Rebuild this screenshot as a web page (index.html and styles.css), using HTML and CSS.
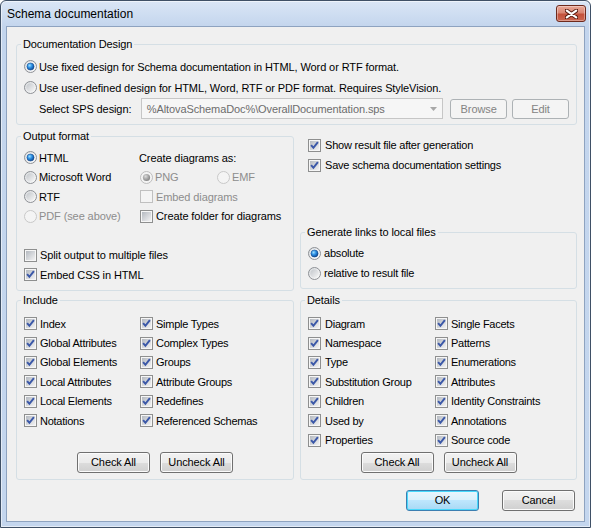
FILE: index.html
```html
<!DOCTYPE html>
<html lang="en">
<head>
<meta charset="utf-8">
<title>Schema documentation</title>
<link rel="stylesheet" href="styles.css">
</head>
<body>
<svg class="defs" width="0" height="0" aria-hidden="true">
  <defs>
    <linearGradient id="g-box" x1="0" y1="0" x2="1" y2="1">
      <stop offset="0" stop-color="#b4b9c0"/>
      <stop offset="1" stop-color="#f2f2f3"/>
    </linearGradient>
    <linearGradient id="g-ring" x1="0" y1="0" x2="1" y2="1">
      <stop offset="0" stop-color="#d9dbde"/>
      <stop offset="1" stop-color="#fdfdfd"/>
    </linearGradient>
    <linearGradient id="g-rin" x1="0" y1="0" x2="1" y2="1">
      <stop offset="0" stop-color="#c2c6cb"/>
      <stop offset="1" stop-color="#f6f6f6"/>
    </linearGradient>
    <radialGradient id="g-dot" cx="0.38" cy="0.35" r="0.72">
      <stop offset="0" stop-color="#9ee0ff"/>
      <stop offset="0.45" stop-color="#2b8ee3"/>
      <stop offset="1" stop-color="#0c3f88"/>
    </radialGradient>
    <radialGradient id="g-dotg" cx="0.38" cy="0.35" r="0.72">
      <stop offset="0" stop-color="#dcdcdc"/>
      <stop offset="0.5" stop-color="#a9a9a9"/>
      <stop offset="1" stop-color="#7e7e7e"/>
    </radialGradient>
    <symbol id="cb-on" viewBox="0 0 13 13">
      <rect x="0.5" y="0.5" width="12" height="12" fill="#f6f6f6" stroke="#8e8f8f"/>
      <rect x="2" y="2" width="9" height="9" fill="url(#g-box)"/>
      <path d="M3.1 6.2 L5.4 8.8 L9.9 3.2" fill="none" stroke="#3b58a8" stroke-width="2"/>
    </symbol>
    <symbol id="cb-off" viewBox="0 0 13 13">
      <rect x="0.5" y="0.5" width="12" height="12" fill="#f6f6f6" stroke="#8e8f8f"/>
      <rect x="2" y="2" width="9" height="9" fill="url(#g-box)"/>
    </symbol>
    <symbol id="cb-dis" viewBox="0 0 13 13">
      <rect x="0.5" y="0.5" width="12" height="12" fill="#f4f4f4" stroke="#c0c0c0"/>
    </symbol>
    <symbol id="rb-on" viewBox="0 0 13 13">
      <circle cx="6.5" cy="6.5" r="6" fill="url(#g-ring)" stroke="#8d9095"/>
      <circle cx="6.5" cy="6.5" r="4.4" fill="#ffffff"/>
      <circle cx="6.5" cy="6.5" r="3.6" fill="url(#g-dot)" stroke="#174a8a" stroke-width="0.6"/>
    </symbol>
    <symbol id="rb-off" viewBox="0 0 13 13">
      <circle cx="6.5" cy="6.5" r="6" fill="url(#g-ring)" stroke="#8d9095"/>
      <circle cx="6.5" cy="6.5" r="4.2" fill="url(#g-rin)"/>
    </symbol>
    <symbol id="rb-don" viewBox="0 0 13 13">
      <circle cx="6.5" cy="6.5" r="6" fill="#f4f4f4" stroke="#bdbdbd"/>
      <circle cx="6.5" cy="6.5" r="3.6" fill="url(#g-dotg)"/>
    </symbol>
    <symbol id="rb-doff" viewBox="0 0 13 13">
      <circle cx="6.5" cy="6.5" r="6" fill="#f4f4f4" stroke="#c8c8c8"/>
    </symbol>
  </defs>
</svg>

<div class="window">
  <div class="titlebar">
    <span class="title">Schema documentation</span>
    <div class="close">
      <svg width="13" height="10" viewBox="0 0 13 10">
        <path d="M1.5 1.5 L11.5 8.5 M11.5 1.5 L1.5 8.5" stroke="#5a1d12" stroke-width="4" stroke-linecap="round"/>
        <path d="M1.8 1.7 L11.2 8.3 M11.2 1.7 L1.8 8.3" stroke="#ffffff" stroke-width="2.2" stroke-linecap="round"/>
      </svg>
    </div>
  </div>

  <div class="client">
    <fieldset class="group doc">
      <legend>Documentation Design</legend>
      <div class="doc-body">
        <label class="row"><svg class="ic rb"><use href="#rb-on"/></svg><span>Use fixed design for Schema documentation in HTML, Word or RTF format.</span></label>
        <label class="row"><svg class="ic rb"><use href="#rb-off"/></svg><span>Use user-defined design for HTML, Word, RTF or PDF format. Requires StyleVision.</span></label>
        <div class="row sel">
          <span class="sel-label">Select SPS design:</span>
          <div class="combo">
            <span class="combo-val">%AltovaSchemaDoc%\OverallDocumentation.sps</span>
            <span class="combo-arr"><svg width="7" height="4" viewBox="0 0 7 4"><path d="M0 0 H7 L3.5 4 Z" fill="#a7a7a7"/></svg></span>
          </div>
          <button class="btn dis browse">Browse</button>
          <button class="btn dis edit">Edit</button>
        </div>
      </div>
    </fieldset>

    <div class="mid">
      <fieldset class="group out">
        <legend>Output format</legend>
        <div class="out-body">
          <label class="cell"><svg class="ic rb"><use href="#rb-on"/></svg><span>HTML</span></label>
          <span class="cell c2 lbl">Create diagrams as:</span>
          <label class="cell"><svg class="ic rb"><use href="#rb-off"/></svg><span>Microsoft Word</span></label>
          <div class="cell c2">
            <label class="png dis"><svg class="ic rb"><use href="#rb-don"/></svg><span>PNG</span></label>
            <label class="dis"><svg class="ic rb"><use href="#rb-doff"/></svg><span>EMF</span></label>
          </div>
          <label class="cell"><svg class="ic rb"><use href="#rb-off"/></svg><span>RTF</span></label>
          <label class="cell c2 dis"><svg class="ic cb"><use href="#cb-dis"/></svg><span>Embed diagrams</span></label>
          <label class="cell dis"><svg class="ic rb"><use href="#rb-doff"/></svg><span>PDF (see above)</span></label>
          <label class="cell c2"><svg class="ic cb"><use href="#cb-off"/></svg><span>Create folder for diagrams</span></label>
          <span class="cell span"></span>
          <label class="cell span"><svg class="ic cb"><use href="#cb-off"/></svg><span>Split output to multiple files</span></label>
          <label class="cell span"><svg class="ic cb"><use href="#cb-on"/></svg><span>Embed CSS in HTML</span></label>
        </div>
      </fieldset>

      <div class="right">
        <label class="rrow"><svg class="ic cb"><use href="#cb-on"/></svg><span>Show result file after generation</span></label>
        <label class="rrow"><svg class="ic cb"><use href="#cb-on"/></svg><span>Save schema documentation settings</span></label>
        <fieldset class="group links">
          <legend>Generate links to local files</legend>
          <div class="links-body">
            <label class="lrow"><svg class="ic rb"><use href="#rb-on"/></svg><span>absolute</span></label>
            <label class="lrow"><svg class="ic rb"><use href="#rb-off"/></svg><span>relative to result file</span></label>
          </div>
        </fieldset>
      </div>
    </div>

    <div class="bot">
      <fieldset class="group inc">
        <legend>Include</legend>
        <div class="list-body">
          <div class="cols">
            <div class="col col1">
              <label class="item"><svg class="ic cb"><use href="#cb-on"/></svg><span>Index</span></label>
              <label class="item"><svg class="ic cb"><use href="#cb-on"/></svg><span>Global Attributes</span></label>
              <label class="item"><svg class="ic cb"><use href="#cb-on"/></svg><span>Global Elements</span></label>
              <label class="item"><svg class="ic cb"><use href="#cb-on"/></svg><span>Local Attributes</span></label>
              <label class="item"><svg class="ic cb"><use href="#cb-on"/></svg><span>Local Elements</span></label>
              <label class="item"><svg class="ic cb"><use href="#cb-on"/></svg><span>Notations</span></label>
            </div>
            <div class="col">
              <label class="item"><svg class="ic cb"><use href="#cb-on"/></svg><span>Simple Types</span></label>
              <label class="item"><svg class="ic cb"><use href="#cb-on"/></svg><span>Complex Types</span></label>
              <label class="item"><svg class="ic cb"><use href="#cb-on"/></svg><span>Groups</span></label>
              <label class="item"><svg class="ic cb"><use href="#cb-on"/></svg><span>Attribute Groups</span></label>
              <label class="item"><svg class="ic cb"><use href="#cb-on"/></svg><span>Redefines</span></label>
              <label class="item"><svg class="ic cb"><use href="#cb-on"/></svg><span>Referenced Schemas</span></label>
            </div>
          </div>
          <div class="btnrow">
            <button class="btn">Check All</button>
            <button class="btn">Uncheck All</button>
          </div>
        </div>
      </fieldset>

      <fieldset class="group det">
        <legend>Details</legend>
        <div class="list-body">
          <div class="cols">
            <div class="col col1">
              <label class="item"><svg class="ic cb"><use href="#cb-on"/></svg><span>Diagram</span></label>
              <label class="item"><svg class="ic cb"><use href="#cb-on"/></svg><span>Namespace</span></label>
              <label class="item"><svg class="ic cb"><use href="#cb-on"/></svg><span>Type</span></label>
              <label class="item"><svg class="ic cb"><use href="#cb-on"/></svg><span>Substitution Group</span></label>
              <label class="item"><svg class="ic cb"><use href="#cb-on"/></svg><span>Children</span></label>
              <label class="item"><svg class="ic cb"><use href="#cb-on"/></svg><span>Used by</span></label>
              <label class="item"><svg class="ic cb"><use href="#cb-on"/></svg><span>Properties</span></label>
            </div>
            <div class="col">
              <label class="item"><svg class="ic cb"><use href="#cb-on"/></svg><span>Single Facets</span></label>
              <label class="item"><svg class="ic cb"><use href="#cb-on"/></svg><span>Patterns</span></label>
              <label class="item"><svg class="ic cb"><use href="#cb-on"/></svg><span>Enumerations</span></label>
              <label class="item"><svg class="ic cb"><use href="#cb-on"/></svg><span>Attributes</span></label>
              <label class="item"><svg class="ic cb"><use href="#cb-on"/></svg><span>Identity Constraints</span></label>
              <label class="item"><svg class="ic cb"><use href="#cb-on"/></svg><span>Annotations</span></label>
              <label class="item"><svg class="ic cb"><use href="#cb-on"/></svg><span>Source code</span></label>
            </div>
          </div>
          <div class="btnrow">
            <button class="btn">Check All</button>
            <button class="btn">Uncheck All</button>
          </div>
        </div>
      </fieldset>
    </div>

    <div class="foot">
      <button class="btn default">OK</button>
      <button class="btn">Cancel</button>
    </div>
  </div>
</div>
</body>
</html>
```

FILE: styles.css
```css
* { box-sizing: border-box; }
html, body { margin: 0; padding: 0; }
body {
  width: 591px;
  height: 528px;
  overflow: hidden;
  background: #ffffff;
  font-family: "Liberation Sans", Arial, sans-serif;
  font-size: 11px;
  letter-spacing: -0.1px;
  color: #000000;
}
.defs { display: block; width: 0; height: 0; overflow: hidden; }

.window {
  width: 591px;
  height: 528px;
  border: 1px solid #3f5066;
  border-radius: 6px 6px 0 0;
  background: linear-gradient(#dae6f6 0, #c3d5ed 26px, #c4d6ee 100%);
  box-shadow: inset 0 0 0 1px rgba(255, 255, 255, 0.55);
  padding: 0 5px 5px 5px;
  display: flex;
  flex-direction: column;
}

.titlebar {
  height: 25px;
  display: flex;
  align-items: flex-start;
  padding-left: 1px;
}
.title {
  font-size: 12px;
  line-height: 14px;
  letter-spacing: 0;
  margin-top: 6px;
}
.close {
  margin-left: auto;
  margin-right: -1px;
  margin-top: 4px;
  width: 30px;
  height: 17px;
  border: 1px solid #6e2a1d;
  border-radius: 3px;
  background: linear-gradient(#eaa999 0%, #d98673 45%, #c4513b 55%, #cb6650 100%);
  box-shadow: inset 0 0 0 1px rgba(255, 255, 255, 0.35);
  display: flex;
  align-items: center;
  justify-content: center;
}
.close svg { display: block; }

.client {
  flex: 1;
  background: #f0f0f0;
  border: 1px solid #8ea3c0;
  padding: 10px 7px 0 9px;
  display: flex;
  flex-direction: column;
}

.group {
  margin: 0;
  padding: 0;
  border: 1px solid #d5dfe5;
  border-radius: 3px;
  min-width: 0;
}
.group legend {
  margin-left: 4px;
  padding: 0 2px;
  height: 14px;
  line-height: 14px;
}

.ic { width: 13px; height: 13px; flex: none; display: block; }
.rb { margin-right: 2px; }
.cb { margin-right: 3px; }
label { display: flex; align-items: center; white-space: nowrap; }
.dis { color: #8d8d8d; }

/* Documentation Design */
.doc-body { padding: 5px 7px 5px 7px; }
.row { height: 21px; display: flex; align-items: center; }
.sel-label { margin-left: 15px; width: 102px; }
.combo {
  width: 303px;
  height: 21px;
  border: 1px solid #c6c6c6;
  background: #f6f6f6;
  display: flex;
  align-items: center;
}
.combo-val {
  flex: 1;
  padding-left: 5px;
  color: #6d6d6d;
  white-space: nowrap;
  overflow: hidden;
}
.combo-arr {
  width: 18px;
  height: 100%;
  display: flex;
  align-items: center;
  justify-content: center;
}
.combo-arr svg { display: block; }

.btn {
  width: 73px;
  height: 21px;
  padding: 0;
  margin: 0;
  font-family: inherit;
  font-size: 11px;
  letter-spacing: -0.1px;
  color: #000;
  border: 1px solid #707070;
  border-radius: 3px;
  background: linear-gradient(#f2f2f2 0%, #ebebeb 50%, #dddddd 50%, #cfcfcf 100%);
  box-shadow: inset 0 0 0 1px #fbfbfb;
  display: flex;
  align-items: center;
  justify-content: center;
}
.btn.dis {
  width: 57px;
  height: 20px;
  color: #838383;
  border-color: #adb2b5;
  background: #f4f4f4;
  box-shadow: none;
}
.browse { margin-left: 7px; }
.edit { margin-left: 5px; }
.btn.default {
  border-color: #3c7fb1;
  background: linear-gradient(#eaf6fd 0%, #d9f0fc 50%, #bee6fd 50%, #a7d9f5 100%);
  box-shadow: inset 0 0 0 1px #48d8fb;
}

/* middle */
.mid { display: flex; gap: 6px; margin-top: 4px; }
.out { width: 278px; flex: none; }
.out-body {
  padding: 5px 0 5.5px 7px;
  display: grid;
  grid-template-columns: 116px 1fr;
  grid-template-rows: repeat(7, 19.5px);
}
.cell { display: flex; align-items: center; white-space: nowrap; }
.cell.span { grid-column: 1 / -1; }
.lbl { margin-left: -1px; }
.png { width: 77px; }

.right {
  flex: 1;
  display: flex;
  flex-direction: column;
  padding-top: 6px;
}
.rrow { height: 20px; padding-left: 8px; letter-spacing: -0.2px; }
.rrow .cb { margin-right: 4px; }
.links { margin-top: auto; margin-bottom: 2px; }
.links-body { padding: 4px 7px 5px 7px; }
.lrow { height: 20px; letter-spacing: -0.2px; }
.lrow .rb { margin-right: 3px; }

/* bottom */
.bot { display: flex; gap: 6px; margin-top: 2px; }
.inc { width: 278px; flex: none; }
.det { flex: 1; }
.list-body { padding: 7px 0 6px 0; }
.cols { display: flex; padding-left: 7px; letter-spacing: -0.25px; }
.col { display: grid; grid-template-rows: repeat(7, 19.4px); }
.inc .col1 { width: 116px; }
.det .col1 { width: 127px; }
.det .col1 .cb { margin-right: 4px; }
.item { display: flex; align-items: center; }
.btnrow {
  display: flex;
  justify-content: center;
  gap: 10px;
  margin-top: 2px;
}

.foot {
  display: flex;
  justify-content: flex-end;
  gap: 23px;
  margin-top: 10px;
  padding-right: 2px;
}
```
